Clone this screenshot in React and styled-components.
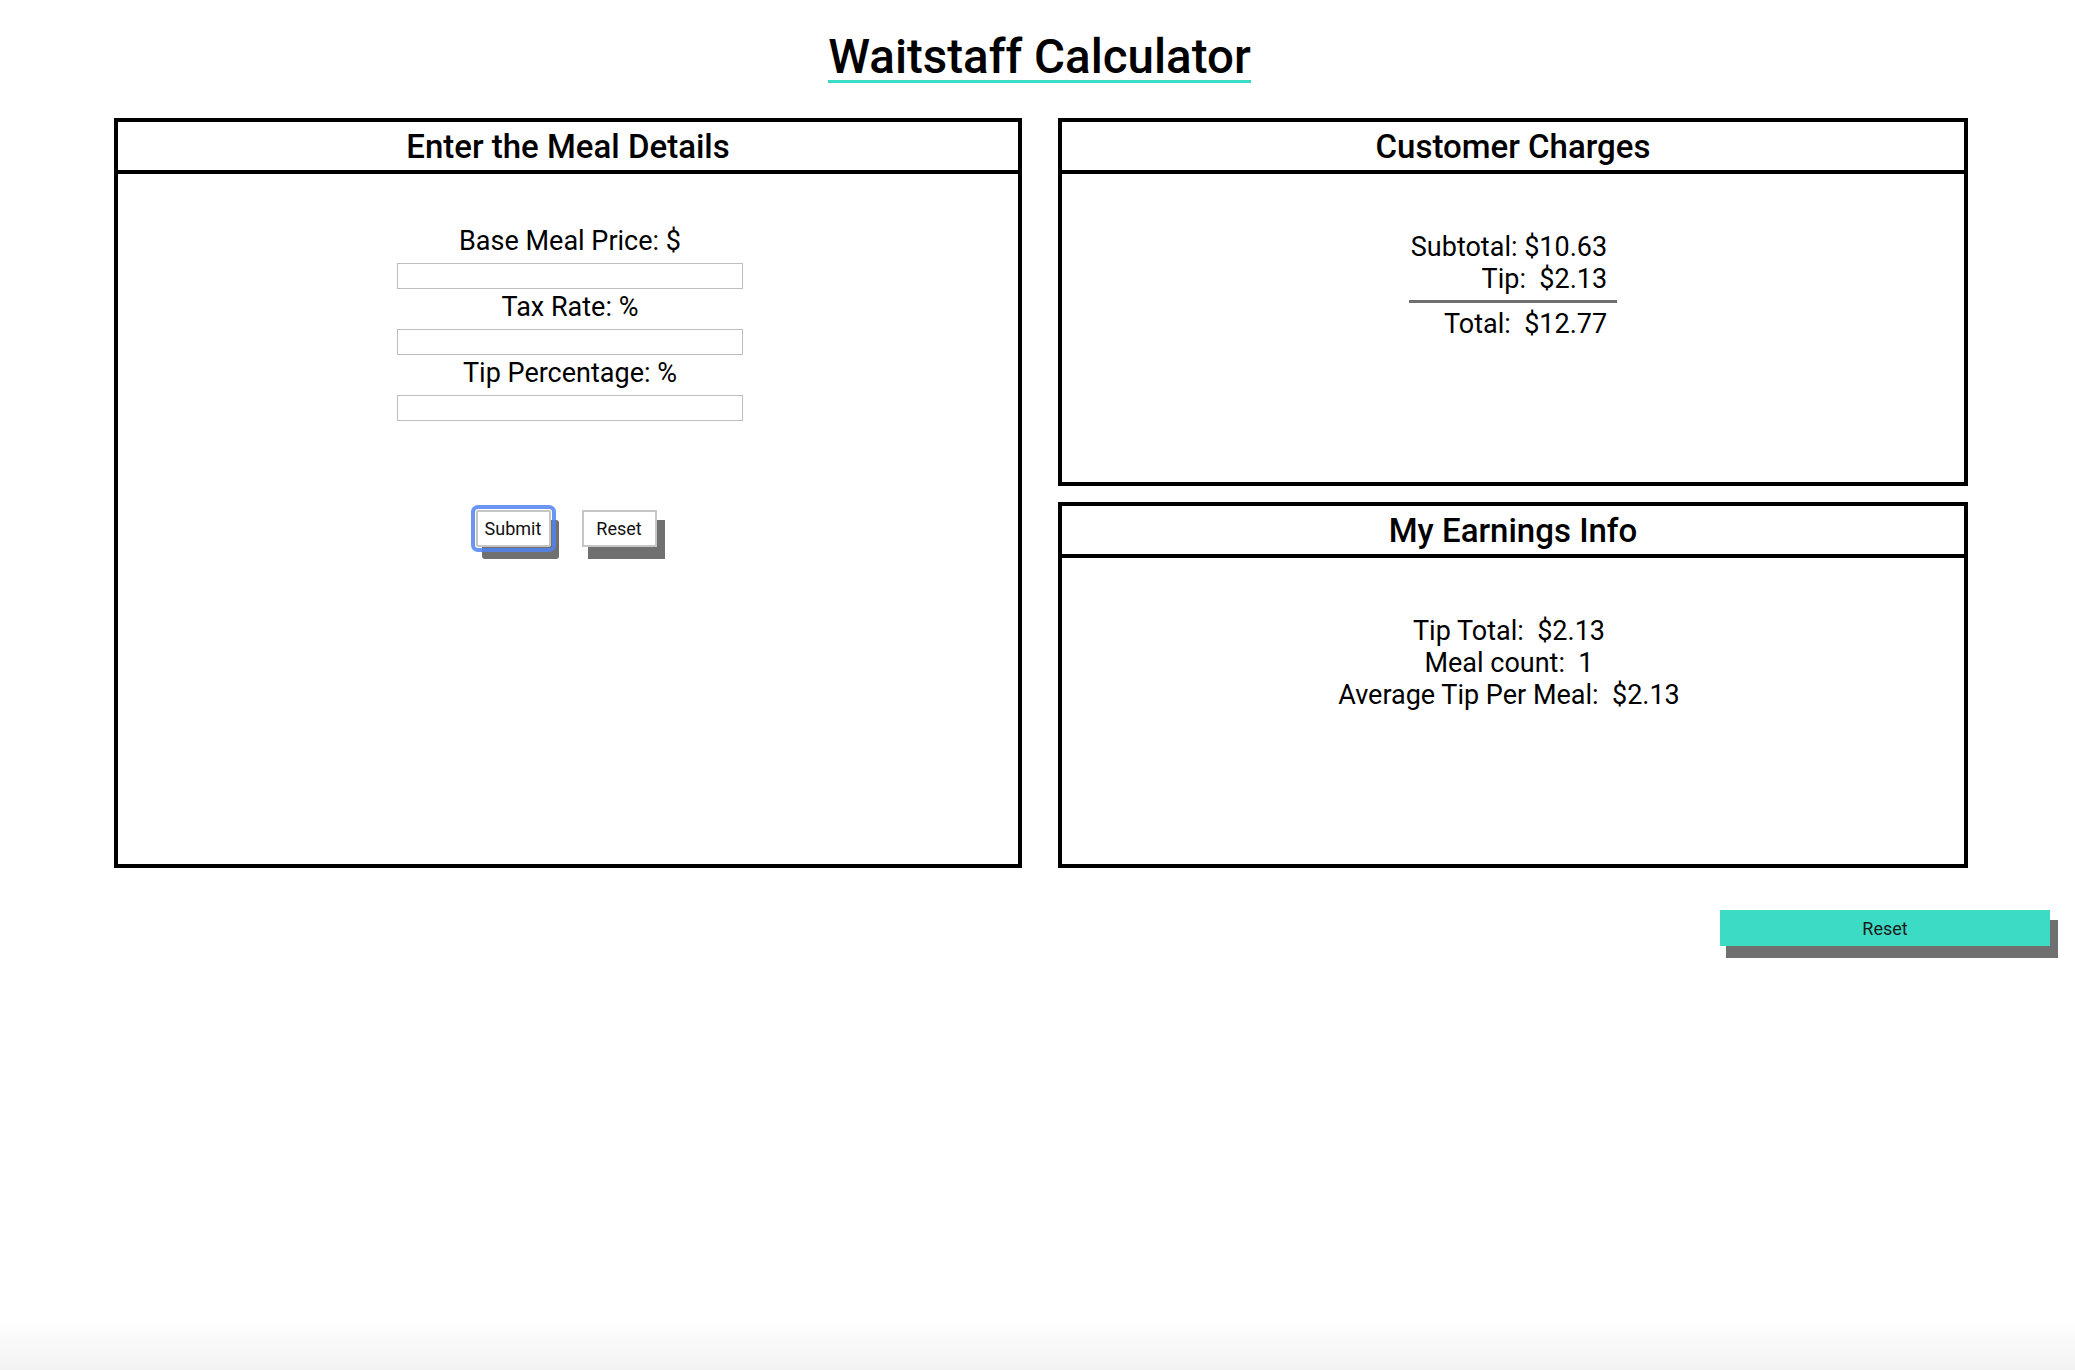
import React from 'react';
import styled, { createGlobalStyle } from 'styled-components';

const GlobalStyle = createGlobalStyle`
    html, body {
        height: 100%;
    }
    html {
        background: linear-gradient(to bottom, #fff 0, #fff 1318px, #f2f2f2 1370px);
    }
    body {
        margin: 0;
        font-family: Roboto, "Liberation Sans", sans-serif;
        color: #000;
    }
`

const Page = styled.div`
    padding-top: 34px;
`

const TitleBar = styled.div`
    display: flex;
    justify-content: center;
    padding-left: 4px;
`

const Title = styled.h1`
    margin: 0;
    font-size: 47.5px;
    font-weight: 500;
    line-height: 46px;
    border-bottom: 3px solid #3bdbc5;
`

const Columns = styled.div`
    display: grid;
    grid-template-columns: 908px 910px;
    column-gap: 36px;
    margin-top: 35px;
    padding-left: 114px;
`

const Stack = styled.div`
    display: flex;
    flex-direction: column;
    gap: 16px;
`

const Panel = styled.section`
    box-sizing: border-box;
    height: ${props => props.height}px;
    border: 4px solid #000;
    display: flex;
    flex-direction: column;
`

const PanelTitle = styled.h2`
    margin: 0;
    height: 48px;
    line-height: 50px;
    border-bottom: 4px solid #000;
    text-align: center;
    font-size: 33px;
    font-weight: 500;
`

const PanelBody = styled.div`
    padding-top: ${props => props.top}px;
    padding-left: ${props => props.left || 0}px;
    padding-right: ${props => props.right || 0}px;
    display: flex;
    flex-direction: column;
    align-items: center;
    font-size: 27px;
`

const Label = styled.label`
    display: block;
    line-height: 36px;
`

const Input = styled.input`
    box-sizing: border-box;
    width: 346px;
    height: 26px;
    margin: 4px 0 0;
    border: 1px solid #bdbdbd;
    background: #fff;
`

const ButtonRow = styled.div`
    display: flex;
    gap: 31px;
    margin-top: 89px;
    margin-right: 8px;
`

const Button = styled.button`
    box-sizing: border-box;
    width: 75px;
    height: 37px;
    padding: 0;
    background: #fff;
    border: 2px solid #c6c6c6;
    font-family: Roboto, "Liberation Sans", sans-serif;
    font-size: 18px;
    color: #111;
    box-shadow: 7px 11px 0 1px #707070;
    ${props => props.focused && `
        outline: 4px solid rgba(80, 130, 240, 0.85);
        outline-offset: 1px;
        border-radius: 2px;
    `}
`

const Charges = styled.div`
    text-align: right;
    line-height: 32px;
    padding: 0 10px 0 2px;
`

const ChargesTop = styled.div`
    margin: 0 -10px 5px -2px;
    padding: 0 10px 5px 2px;
    border-bottom: 3px solid #707070;
`

const Line = styled.div`
    white-space: pre;
    line-height: 32px;
`

const Footer = styled.div`
    display: flex;
    justify-content: flex-end;
    padding-right: 25px;
    margin-top: 42px;
`

const WideButton = styled.button`
    width: 330px;
    height: 36px;
    border: none;
    background: #3bdbc5;
    font-family: Roboto, "Liberation Sans", sans-serif;
    font-size: 18px;
    color: #1a1a1a;
    box-shadow: 7px 11px 0 1px #707070;
`

const fields = ['Base Meal Price: $', 'Tax Rate: %', 'Tip Percentage: %'];

const App = () => {
    return (
        <>
            <GlobalStyle />
            <Page>
                <TitleBar>
                    <Title>Waitstaff Calculator</Title>
                </TitleBar>
                <Columns>
                    <Panel height={750}>
                        <PanelTitle>Enter the Meal Details</PanelTitle>
                        <PanelBody top={49} left={4}>
                            {
                                fields.map(label => (
                                    <React.Fragment key={label}>
                                        <Label>{label}</Label>
                                        <Input type="text" />
                                    </React.Fragment>
                                ))
                            }
                            <ButtonRow>
                                <Button focused>Submit</Button>
                                <Button>Reset</Button>
                            </ButtonRow>
                        </PanelBody>
                    </Panel>
                    <Stack>
                        <Panel height={368}>
                            <PanelTitle>Customer Charges</PanelTitle>
                            <PanelBody top={57}>
                                <Charges>
                                    <ChargesTop>
                                        <Line>Subtotal: $10.63</Line>
                                        <Line>Tip:  $2.13</Line>
                                    </ChargesTop>
                                    <Line>Total:  $12.77</Line>
                                </Charges>
                            </PanelBody>
                        </Panel>
                        <Panel height={366}>
                            <PanelTitle>My Earnings Info</PanelTitle>
                            <PanelBody top={57} right={8}>
                                <Line>Tip Total:  $2.13</Line>
                                <Line>Meal count:  1</Line>
                                <Line>Average Tip Per Meal:  $2.13</Line>
                            </PanelBody>
                        </Panel>
                    </Stack>
                </Columns>
                <Footer>
                    <WideButton>Reset</WideButton>
                </Footer>
            </Page>
        </>
    );
};

export default App;
